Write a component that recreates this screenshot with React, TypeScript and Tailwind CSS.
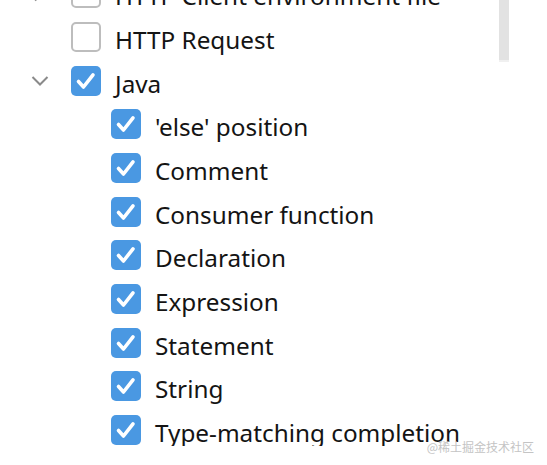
import React from "react";

type Row = { label: string; level: number; checked: boolean; chevron?: "right" | "down" };

const rows: Row[] = [
  { label: "HTTP Client environment file", level: 0, checked: false, chevron: "right" },
  { label: "HTTP Request", level: 0, checked: false },
  { label: "Java", level: 0, checked: true, chevron: "down" },
  { label: "'else' position", level: 1, checked: true },
  { label: "Comment", level: 1, checked: true },
  { label: "Consumer function", level: 1, checked: true },
  { label: "Declaration", level: 1, checked: true },
  { label: "Expression", level: 1, checked: true },
  { label: "Statement", level: 1, checked: true },
  { label: "String", level: 1, checked: true },
  { label: "Type-matching completion", level: 1, checked: true },
];

function Box({ checked }: { checked: boolean }) {
  if (!checked) {
    return (
      <div className="w-[30px] h-[30px] shrink-0 rounded-[5px] border-2 border-[#bdbdbd] bg-white" />
    );
  }
  return (
    <div className="w-[30px] h-[30px] shrink-0 rounded-[5px] bg-[#4a98e2] flex items-center justify-center">
      <svg width="30" height="30" viewBox="0 0 30 30">
        <path d="M7.5 15.5 L12.5 21 L22 8.8" fill="none" stroke="#ffffff" strokeWidth="3.6" strokeLinecap="round" strokeLinejoin="round" />
      </svg>
    </div>
  );
}

function Chevron({ dir }: { dir?: "right" | "down" }) {
  return (
    <div className="w-[40px] h-[30px] shrink-0 flex items-center justify-start">
      {dir === "down" && (
        <svg width="18" height="12" viewBox="0 0 18 12">
          <path d="M1.5 2 L9 9.5 L16.5 2" fill="none" stroke="#8a8a8a" strokeWidth="2" />
        </svg>
      )}
      {dir === "right" && (
        <svg width="12" height="18" viewBox="0 0 12 18" className="ml-[2px]">
          <path d="M2 1.5 L9.5 9 L2 16.5" fill="none" stroke="#8a8a8a" strokeWidth="2" />
        </svg>
      )}
    </div>
  );
}

export default function App() {
  return (
    <div className="relative w-[547px] h-[465px] bg-white overflow-hidden" style={{ fontFamily: '"Noto Sans", "Open Sans", sans-serif' }}>
      <div className="h-[446px] overflow-hidden flex">
        <div className="flex-1 flex flex-col mt-[-28.65px] pl-[31px]">
          {rows.map((r, i) => (
            <div key={i} className="h-[43.7px] shrink-0 flex items-center">
              {r.level === 1 ? <div className="w-[80px] shrink-0" /> : <Chevron dir={r.chevron} />}
              <Box checked={r.checked} />
              <span className="ml-[14px] pt-[6px] text-[24.3px] leading-[32px] text-[#141414] whitespace-nowrap">
                {r.label}
              </span>
            </div>
          ))}
        </div>
        <div className="w-[48px] shrink-0 flex">
          <div className="w-[10px] h-[62px] bg-[#e2e2e2] border-b-2 border-[#f0f0f0]" />
        </div>
      </div>
      <div
        className="absolute right-[13px] bottom-[12px] text-[12px] leading-[12px] text-[#c4c4c4] whitespace-nowrap"
        style={{ fontFamily: '"Noto Sans CJK SC", "Noto Sans", sans-serif' }}
      >
        @稀土掘金技术社区
      </div>
    </div>
  );
}
